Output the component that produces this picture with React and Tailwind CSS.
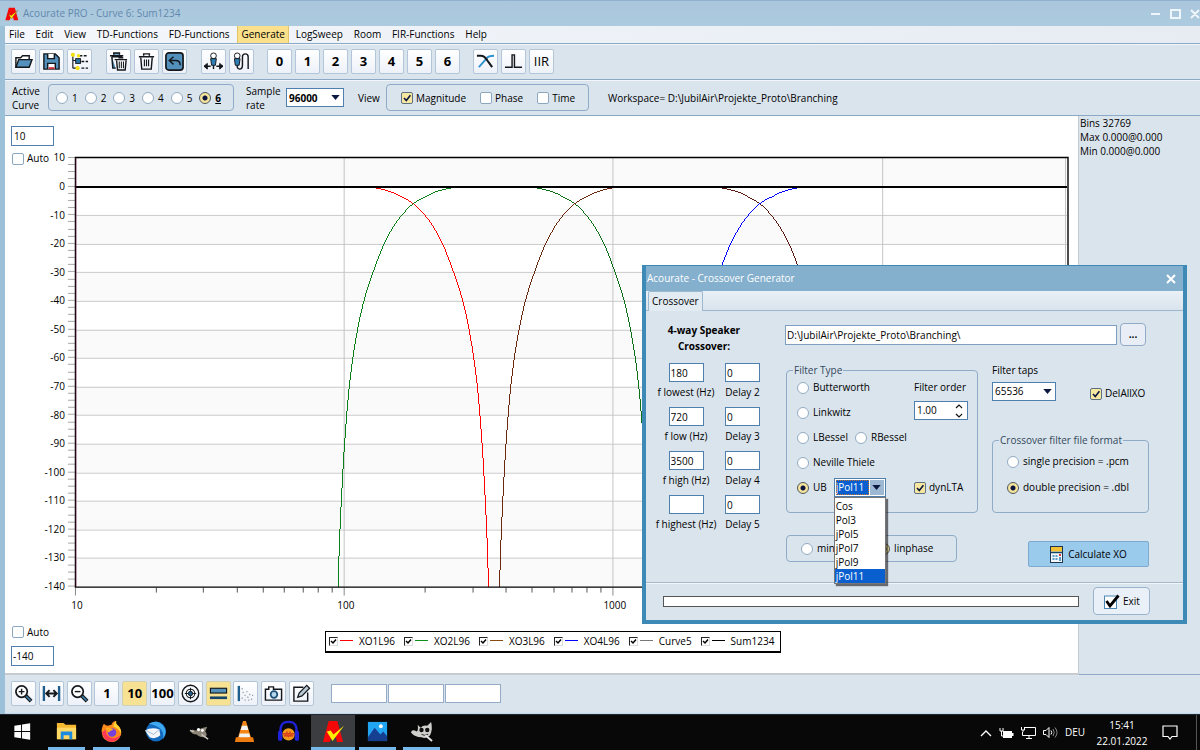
import { useState } from "react";

const X0 = 75;
const DECADE = 269.2;
const xOf = (hz) => X0 + Math.log10(hz / 10) * DECADE;
const yOf = (db) => 158 + (10 - db) * 2.86;

// Slope of one crossover: distance from the centre frequency, y position
const SLOPE = [
    [-62, 186.6], [-50, 187], [-38, 188], [-24, 191.3], [-14, 195.7], [0, 203.7],
    [11.3, 215], [21.3, 229], [31.6, 249.3], [40.3, 272.3], [47.3, 293.3], [53, 315.7],
    [57.6, 340], [61.2, 363], [65.2, 398], [69.2, 450], [72, 500], [74, 545], [75.3, 587],
];

const CURVES = [
    { center: 413.7, side: 1, color: "#ff0000" },
    { center: 413.7, side: -1, color: "#0b8018" },
    { center: 575.3, side: 1, color: "#0b7018" },
    { center: 575.3, side: -1, color: "#6b2a10" },
    { center: 760.5, side: 1, color: "#5a1a10" },
    { center: 760.5, side: -1, color: "#0000ff" },
];

const slopePath = (center, side) => {
    const p = SLOPE.map(([d, y]) => [center + side * d, y]);
    let d = `M${p[0][0]} ${p[0][1]}`;
    for (let i = 0; i < p.length - 1; i++) {
        const a = p[i - 1] || p[i];
        const b = p[i];
        const c = p[i + 1];
        const e = p[i + 2] || c;
        d += ` C${b[0] + (c[0] - a[0]) / 6} ${b[1] + (c[1] - a[1]) / 6} ${c[0] - (e[0] - b[0]) / 6} ${c[1] - (e[1] - b[1]) / 6} ${c[0]} ${c[1]}`;
    }
    return d;
};

const LEVELS = Array.from({ length: 16 }, (_, i) => 10 - i * 10);
const MINOR_Y = Array.from({ length: 61 }, (_, i) => 10 - i * 2.5);
const MINOR_X = [10, 100, 1000, 10000]
    .flatMap((base) => [2, 3, 4, 5, 6, 7, 8, 9].map((n) => n * base))
    .filter((hz) => hz <= 48000);

const Chart = () => (
    <svg viewBox="5 146 1074 479" className="w-full block [grid-area:1/1]">
        {LEVELS.slice(0, 15).map((db, i) => (
            <rect key={db} x="75" y={yOf(db)} width="993" height="28.6" fill={i % 2 ? "#ffffff" : "#fafafa"} />
        ))}
        {LEVELS.slice(1, 15).map((db) => (
            <path key={db} d={`M75 ${Math.round(yOf(db)) + 0.5}H1068`} stroke="#cacaca" />
        ))}
        {[100, 1000, 10000, 48000].map((hz) => (
            <path key={hz} d={`M${Math.round(xOf(hz)) + 0.5} 158V587`} stroke="#c4c4c4" />
        ))}
        {MINOR_Y.map((db) => (
            <path key={db} d={`M68 ${Math.round(yOf(db)) - 0.5}H75`} stroke="#a8a8a8" />
        ))}
        {MINOR_X.map((hz) => (
            <path key={hz} d={`M${Math.round(xOf(hz)) + 0.5} 588V593`} stroke="#555" />
        ))}
        {[10, 100, 1000, 10000].map((hz) => (
            <path key={hz} d={`M${Math.round(xOf(hz)) + 0.5} 588V596`} stroke="#888" />
        ))}
        {CURVES.map((c) => (
            <path key={c.center + c.color} d={slopePath(c.center, c.side)} fill="none" stroke={c.color} shapeRendering="crispEdges" />
        ))}
        <path d="M75 187H1068" stroke="#000" strokeWidth="2" />
        <path d="M75.5 157.5H1069V587.5H75.5Z" fill="none" stroke="#000" strokeWidth="1.4" />
        <path d="M76 158V587" stroke="#6b1140" strokeWidth=".6" />
        {LEVELS.map((db) => (
            <text key={db} x="65" y={yOf(db) + 3.5} textAnchor="end" fontSize="10" fill="#000">{db}</text>
        ))}
        {[10, 100, 1000].map((hz) => (
            <text key={hz} x={xOf(hz) + 2} y="609" textAnchor="middle" fontSize="10" fill="#000">{hz}</text>
        ))}
    </svg>
);

const Check = ({ label, defaultChecked, className = "gap-[3px]" }) => (
    <label className={`flex items-center whitespace-nowrap ${className}`}>
        <span className="grid shrink-0">
            <input
                type="checkbox"
                defaultChecked={defaultChecked}
                className="peer [grid-area:1/1] appearance-none w-3 h-3 rounded-[2px] border border-[#8ba6bf] bg-white checked:bg-[#f7e8a0] checked:border-[#5d6f80]"
            />
            <svg viewBox="0 0 12 12" className="[grid-area:1/1] w-3 h-3 pointer-events-none invisible peer-checked:visible">
                <path d="M3 6l2.3 2.6L9.4 3.2" fill="none" stroke="#0b1540" strokeWidth="1.6" />
            </svg>
        </span>
        {label}
    </label>
);

const Radio = ({ name, label, defaultChecked, className = "gap-[4px]" }) => (
    <label className={`flex items-center whitespace-nowrap ${className}`}>
        <input
            type="radio"
            name={name}
            defaultChecked={defaultChecked}
            className="appearance-none shrink-0 w-3 h-3 rounded-full border border-[#93abc1] bg-white checked:border-[#4d565c] checked:bg-[radial-gradient(circle,#0b1540_0_2px,#f6e59a_3px)]"
        />
        {label}
    </label>
);

const ToolButton = ({ label, active, children }) => (
    <button
        type="button"
        aria-label={label}
        className={`w-[25px] h-[25px] shrink-0 flex items-center justify-center rounded-[2px] border text-[13px] font-bold ${active ? "bg-[#f7e294] border-[#cfd0b4]" : "bg-linear-to-b from-white to-[#edf1f8] border-[#b3c5d8]"}`}
    >
        {children}
    </button>
);

const Icon = ({ children, className = "w-[19px] h-[19px]" }) => (
    <svg viewBox="0 0 20 20" fill="none" stroke="#14181c" strokeWidth="1.5" className={`shrink-0 ${className}`}>
        {children}
    </svg>
);

const Arrow = () => (
    <svg viewBox="0 0 10 6" className="w-[9px] h-[5px]">
        <path d="M0 0H10L5 6Z" fill="#0b1840" />
    </svg>
);

const Logo = ({ className }) => (
    <svg viewBox="0 0 20 20" className={className}>
        <path d="M5.5 1H14L19 19H12.5L11.8 15H8L6.5 19H0.5Z" fill="#f40808" />
        <path d="M5 10L9 17L18 5L9 12Z" fill="#fff000" stroke="#7a1c00" strokeWidth=".5" />
    </svg>
);

const MENU = ["File", "Edit", "View", "TD-Functions", "FD-Functions", "Generate", "LogSweep", "Room", "FIR-Functions", "Help"];

const TitleBar = () => (
    <header className="h-[26px] flex items-center pl-[5px] border-t border-[#8fb0cf] bg-linear-to-b from-[#a9c6dc] to-[#adcbdf] text-[#6288ae]">
        <Logo className="w-[14px] h-[14px] mr-[4px]" />
        <h1 className="flex-1">Acourate PRO - Curve 6: Sum1234</h1>
        <svg viewBox="0 0 52 12" className="w-[52px] h-3 mr-[-1px]" fill="none" stroke="#eef6fb" strokeWidth="2">
            <path d="M2 6H11M22 2H31V10H22ZM42 2L50 10M50 2L42 10" />
        </svg>
    </header>
);

const MenuBar = () => (
    <div className="h-[18px] border-b border-[#8ba9c6] bg-linear-to-r from-[#f4f7fc] to-[#e6ecf2]">
        <nav className="w-[486px] h-full flex items-center justify-between">
            {MENU.map((m) => (
                <button
                    key={m}
                    type="button"
                    className={`h-full whitespace-nowrap ${m === "Generate" ? "px-[3px] ml-px bg-[#fae08a] border-x border-[#e0c465]" : "px-[4px]"}`}
                >
                    {m}
                </button>
            ))}
        </nav>
    </div>
);

const MainToolbar = () => (
    <div className="h-9 flex items-center gap-[14px] pl-[6px] border-b border-[#8ba9c6] shadow-[inset_0_1px_#f2f6fa]">
        <div className="flex gap-[3px]">
            <ToolButton label="Open">
                <Icon>
                    <path d="M2 16V6H7L9 4H16V8" fill="#fff" />
                    <path d="M2 16L5 8H19L16 16Z" fill="#5390bb" />
                </Icon>
            </ToolButton>
            <ToolButton label="Save">
                <Icon>
                    <path d="M2 2H14L18 6V18H2Z" fill="#5390bb" />
                    <path d="M6 2V7H13V2" fill="#fff" />
                    <path d="M6 18V12H14V18" fill="#fff" />
                    <path d="M7 17H13" stroke="#cc2936" strokeWidth="2" />
                </Icon>
            </ToolButton>
            <ToolButton label="Structure">
                <Icon>
                    <path d="M3 2V17M3 9H8M3 17H8M9 4H11" strokeWidth="1.2" />
                    <path d="M10 4H19M12 10H19M12 17H19" strokeDasharray="3 1.5" />
                    <circle cx="3" cy="3" r="2.2" fill="#f3df12" stroke="none" />
                    <circle cx="9" cy="4" r="1.8" fill="#f3df12" stroke="none" />
                    <rect x="6" y="7" width="5" height="5" fill="#2b74a8" strokeWidth="1" />
                    <circle cx="8" cy="17" r="2.2" fill="#f3df12" stroke="none" />
                </Icon>
            </ToolButton>
        </div>
        <div className="flex gap-[3px]">
            <ToolButton label="Clear all curves">
                <Icon>
                    <path d="M1 4H15M5 3V1H11V3M3 5L4 17H7M3 5H14" fill="#5390bb" />
                    <path d="M6 8H19M8 9L9 19H17L18 9M10 6H15" fill="#fff" />
                    <path d="M10.8 10V17M13 10V17M15.200 10V17" strokeWidth="1.1" />
                </Icon>
            </ToolButton>
            <ToolButton label="Clear curve">
                <Icon>
                    <path d="M2 5H18M7 4V2H13V4M4 6L5 18H15L16 6" />
                    <path d="M7.800 8V15M10 8V15M12.200 8V15" strokeWidth="1.2" />
                </Icon>
            </ToolButton>
            <ToolButton label="Undo">
                <Icon>
                    <rect x="1" y="1" width="18" height="18" rx="3" fill="#5390bb" strokeWidth="1.8" />
                    <path d="M5 9H11Q16 9 16 14M9 5L4.500 9L9 13" />
                </Icon>
            </ToolButton>
        </div>
        <div className="flex gap-[3px]">
            <ToolButton label="Calibrate">
                <Icon>
                    <circle cx="10" cy="4" r="3" fill="#fff" strokeWidth="1" />
                    <path d="M7 7H13L12 14H8Z" fill="#2f7eb5" strokeWidth="1" />
                    <path d="M10 14V18" />
                    <path d="M0 15H7M13 15H20" strokeWidth="1.500" />
                    <path d="M3.500 12L0 15L3.500 18ZM16.500 12L20 15L16.500 18Z" fill="#14181c" strokeWidth="1" />
                </Icon>
            </ToolButton>
            <ToolButton label="Microphone">
                <Icon>
                    <circle cx="5.500" cy="4" r="3" fill="#fff" strokeWidth="1" />
                    <path d="M2.500 7H8.500L7.500 14H3.500Z" fill="#2f7eb5" strokeWidth="1" />
                    <path d="M5.500 14V16Q6 18 8 18Q11 18 11 14V5Q11 2 14 2Q17 2 17 5V18" />
                </Icon>
            </ToolButton>
        </div>
        <div className="flex gap-[3px] -ml-px">
            {["0", "1", "2", "3", "4", "5", "6"].map((n) => (
                <ToolButton key={n} label={`Curve ${n}`}>{n}</ToolButton>
            ))}
        </div>
        <div className="flex gap-[3px] -ml-px">
            <ToolButton label="Crossover">
                <Icon>
                    <path d="M3 16L11 7Q13 4 19 4" stroke="#2f93cf" strokeWidth="2" />
                    <path d="M1 4H5Q9 4 12 9L17 16" strokeWidth="2.200" />
                </Icon>
            </ToolButton>
            <ToolButton label="Pulse">
                <Icon><path d="M1 16H8.500V3H11V16H19" /></Icon>
            </ToolButton>
            <ToolButton label="IIR"><span className="font-normal text-[13px]">IIR</span></ToolButton>
        </div>
    </div>
);

const CurveBar = () => (
    <div className="h-9 flex items-center pl-[7px] border-b border-[#8ba9c6] shadow-[inset_0_1px_#f2f6fa] leading-[14px]">
        <p className="w-9">Active Curve</p>
        <div className="w-[186px] h-[27px] shrink-0 flex items-center justify-between pl-[7px] pr-[12px] rounded border border-[#8fabc8]">
            {["1", "2", "3", "4", "5"].map((n) => (
                <Radio key={n} name="curve" label={n} />
            ))}
            <Radio name="curve" label={<b className="underline">6</b>} defaultChecked />
        </div>
        <label htmlFor="rate" className="w-10 ml-3">Sample rate</label>
        <div className="relative">
            <select id="rate" className="appearance-none w-[58px] h-[19px] pl-[2px] border border-[#4f7fae] bg-white font-bold">
                <option>96000</option>
            </select>
            <span className="absolute right-[4px] top-[7px] pointer-events-none flex"><Arrow /></span>
        </div>
        <p className="w-7 ml-[14px]">View</p>
        <div className="w-[203px] h-[27px] flex items-center gap-[14px] pl-[14px] rounded border border-[#8fabc8]">
            <Check label="Magnitude" defaultChecked />
            <Check label="Phase" />
            <Check label="Time" />
        </div>
        <p className="ml-[19px] whitespace-nowrap">Workspace= D:\JubilAir\Projekte_Proto\Branching</p>
    </div>
);

const LEGEND = [
    ["XO1L96", "#ff0000"],
    ["XO2L96", "#0b9018"],
    ["XO3L96", "#8a4a10"],
    ["XO4L96", "#0000ff"],
    ["Curve5", "#777777"],
    ["Sum1234", "#000000"],
];

const Legend = () => (
    <div className="h-[22px] ml-[271px] flex items-center gap-[9px] pl-[3px] pr-[6px] border border-b-2 border-black bg-white">
        {LEGEND.map(([name, color]) => (
            <label key={name} className="flex items-center whitespace-nowrap">
                <span className="grid">
                    <input type="checkbox" defaultChecked className="[grid-area:1/1] appearance-none w-[9px] h-[9px] border border-r-[#ddd] border-b-[#ddd] border-[#222]" />
                    <svg viewBox="0 0 9 9" className="[grid-area:1/1] w-[9px] h-[9px] pointer-events-none">
                        <path d="M2 4L4 6L7 2.500" fill="none" stroke="#000" strokeWidth="1.500" />
                    </svg>
                </span>
                <svg viewBox="0 0 13 2" className="w-[13px] h-[2px] ml-[2px] mr-[6px]">
                    <path d="M0 .5H13" stroke={color} />
                </svg>
                {name}
            </label>
        ))}
    </div>
);

const ChartPane = () => (
    <section className="flex-1 min-w-0 flex flex-col bg-white border-r border-b-2 border-[#c6cbd0] pt-[10px]">
        <input aria-label="Upper limit" defaultValue="10" className="w-[43px] h-5 ml-[6px] pl-[2px] border border-[#4f7fae] bg-white" />
        <div className="grid">
            <Chart />
            <div className="[grid-area:1/1] justify-self-start pl-[7px] pt-[5px]">
                <Check label="Auto" />
            </div>
        </div>
        <div className="flex items-start pl-[6px]">
            <div className="w-[43px] flex flex-col gap-[6px] pl-px">
                <Check label="Auto" />
                <input aria-label="Lower limit" defaultValue="-140" className="w-[43px] h-5 -ml-px pl-px border border-[#4f7fae] bg-white" />
            </div>
            <div className="pt-[6px]"><Legend /></div>
        </div>
    </section>
);

const BottomToolbar = () => (
    <div className="h-[39px] flex items-center gap-[17px] pl-[6px] pb-[2px] border-t border-[#dfe6ee] border-b border-b-[#bfd8ee]">
        <div className="w-[303px] flex justify-between">
            <ToolButton label="Zoom in">
                <Icon>
                    <path d="M12 12L18 18" strokeWidth="4" />
                    <path d="M12.500 12.500L17.500 17.500" stroke="#3f7fae" strokeWidth="1.500" />
                    <circle cx="8" cy="8" r="6" fill="#fff" strokeWidth="1.800" />
                    <path d="M5 8H11M8 5V11" />
                </Icon>
            </ToolButton>
            <ToolButton label="Fit width">
                <Icon>
                    <path d="M2 2V18M18 2V18" stroke="#1f5f8e" strokeWidth="2.500" />
                    <path d="M4 10H16M8 6.500L4.500 10L8 13.500M12 6.500L15.500 10L12 13.500" strokeWidth="2" />
                </Icon>
            </ToolButton>
            <ToolButton label="Zoom out">
                <Icon>
                    <path d="M12 12L18 18" strokeWidth="4" />
                    <path d="M12.500 12.500L17.500 17.500" stroke="#3f7fae" strokeWidth="1.500" />
                    <circle cx="8" cy="8" r="6" fill="#fff" strokeWidth="1.800" />
                    <path d="M5 8H11" />
                </Icon>
            </ToolButton>
            <ToolButton label="Scale 1">1</ToolButton>
            <ToolButton label="Scale 10" active>10</ToolButton>
            <ToolButton label="Scale 100">100</ToolButton>
            <ToolButton label="Target">
                <Icon>
                    <circle cx="10" cy="10" r="8.700" />
                    <circle cx="10" cy="10" r="4.500" strokeWidth="1.100" />
                    <path d="M10 4V8M10 12V16M4 10H8M12 10H16" strokeWidth="1" />
                    <circle cx="10" cy="10" r="2.300" fill="#1f5f8e" strokeWidth="1" />
                </Icon>
            </ToolButton>
            <ToolButton label="Lines" active>
                <Icon>
                    <rect x="1.500" y="4.500" width="17" height="5" fill="#5390bb" strokeWidth="1.200" />
                    <path d="M1 14.500H19" stroke="#16456a" strokeWidth="2.800" />
                </Icon>
            </ToolButton>
            <ToolButton label="Scatter">
                <Icon>
                    <path d="M3 2V18" stroke="#1f5f8e" strokeWidth="2.500" />
                    <path d="M6 5h1M7 9h1M9 12h1M6 15h1M11 8h1M12 14h1M9 17h1M14 11h1M16 16h1M17 12h1M13 17h1" stroke="#7d8c99" />
                </Icon>
            </ToolButton>
            <ToolButton label="Snapshot">
                <Icon>
                    <path d="M1.500 5.500H5V3H10V5.500H18.500V17H1.500Z" />
                    <circle cx="10.500" cy="11" r="3.500" fill="#b7d5ea" stroke="#1b4f78" strokeWidth="1.800" />
                </Icon>
            </ToolButton>
            <ToolButton label="Edit">
                <Icon>
                    <path d="M12 3.500H2V18H16.500V9" />
                    <path d="M6 14L7.500 9.500L15.500 1.500L18.500 4.500L10.500 12.500Z" fill="#b9c9d6" strokeWidth="1.300" />
                </Icon>
            </ToolButton>
        </div>
        <div className="flex gap-px">
            {["Cursor X", "Cursor Y", "Difference"].map((n) => (
                <input key={n} aria-label={n} readOnly className="w-14 h-[19px] border border-[#93abc6] bg-white" />
            ))}
        </div>
    </div>
);

const FIELDS = [
    ["f lowest (Hz)", "180", "Delay 2"],
    ["f low (Hz)", "720", "Delay 3"],
    ["f high (Hz)", "3500", "Delay 4"],
    ["f highest (Hz)", "", "Delay 5"],
];

const Field = ({ label, value }) => (
    <label className="flex flex-col items-center gap-[3px] whitespace-nowrap">
        <input defaultValue={value} className="w-[35px] h-[19px] pl-px border border-[#4f7fae] bg-white" />
        {label}
    </label>
);

const POLYS = ["Cos", "Pol3", "jPol5", "jPol7", "jPol9", "jPol11"];

const PolySelect = () => {
    const [value, setValue] = useState("jPol11");

    return (
        <div className="relative w-[52px]">
            <div className="flex h-[19px] border border-[#4f7fae] bg-white p-px">
                <select
                    aria-label="UB type"
                    value={value}
                    onChange={(e) => setValue(e.target.value)}
                    className="appearance-none w-[33px] bg-[#0a5fd0] text-white outline outline-dotted outline-[#c9732a] -outline-offset-1"
                >
                    {POLYS.map((p) => <option key={p}>{p}</option>)}
                </select>
                <span className="flex-1 flex items-center justify-center ml-px bg-[#9db8d2]"><Arrow /></span>
            </div>
            <ul className="absolute z-10 left-0 top-full w-[52px] pt-px border border-[#777] bg-white shadow-[2px_2px_1px_#00000088] leading-[14px]">
                {POLYS.map((p) => (
                    <li
                        key={p}
                        onClick={() => setValue(p)}
                        className={`h-[14px] pl-px ${p === value ? "bg-[#0a5fd0] text-white" : ""}`}
                    >
                        {p}
                    </li>
                ))}
            </ul>
        </div>
    );
};

const FilterType = () => (
    <fieldset className="w-[192px] h-[150px] border border-[#8fabc8] rounded pl-[10px]">
        <legend className="-ml-[4px] px-px text-[#33485c] leading-[15px]">Filter Type</legend>
        <div className="flex -mt-[3px]">
            <div className="w-[117px] flex flex-col">
                <div className="h-[25px] flex items-center"><Radio name="type" label="Butterworth" /></div>
                <div className="h-[25px] flex items-center"><Radio name="type" label="Linkwitz" /></div>
                <div className="h-[25px] flex items-center gap-[7px]">
                    <Radio name="type" label="LBessel" />
                    <Radio name="type" label="RBessel" />
                </div>
                <div className="h-[25px] flex items-center"><Radio name="type" label="Neville Thiele" /></div>
                <div className="h-[25px] flex items-center gap-[7px]">
                    <Radio name="type" label="UB" defaultChecked />
                    <PolySelect />
                </div>
            </div>
            <div className="flex flex-col justify-between pb-[5px]">
                <label className="flex flex-col whitespace-nowrap pt-[5px]">
                    Filter order
                    <span className="flex items-center w-[54px] h-[19px] mt-[6px] border border-[#4f7fae] bg-white">
                        <input defaultValue="1.00" className="w-10 pl-[2px]" />
                        <svg viewBox="0 0 8 14" className="w-2 h-[14px]" fill="none" stroke="#111" strokeWidth="1.200">
                            <path d="M1 4L4 1L7 4M1 10L4 13L7 10" />
                        </svg>
                    </span>
                </label>
                <Check label="dynLTA" defaultChecked />
            </div>
        </div>
    </fieldset>
);

const FileFormat = () => (
    <fieldset className="w-[157px] h-[80px] border border-[#8fabc8] rounded pl-[14px]">
        <legend className="-ml-[8px] px-px text-[#33485c] leading-[15px] whitespace-nowrap">Crossover filter file format</legend>
        <div className="flex flex-col gap-[11px] pt-[6px]">
            <Radio name="format" label="single precision = .pcm" />
            <Radio name="format" label="double precision = .dbl" defaultChecked />
        </div>
    </fieldset>
);

const CrossoverDialog = () => (
    <div role="dialog" aria-label="Crossover Generator" className="absolute left-[642px] top-[265px] w-[545px] border-4 border-t border-[#3e8ab6] bg-[#dae4ed]">
        <div className="h-[25px] flex items-center justify-between pl-px pr-[4px] bg-[#84b0ce] text-white">
            <h2>Acourate - Crossover Generator</h2>
            <button type="button" aria-label="Close" className="p-[3px]">
                <svg viewBox="0 0 10 10" className="w-[10px] h-[10px]" stroke="#fff" strokeWidth="2">
                    <path d="M1 1L9 9M9 1L1 9" />
                </svg>
            </button>
        </div>
        <div className="h-5 pl-[2px] border-b border-[#9bb8cf] bg-linear-to-b from-[#e9f0f6] to-[#dae4ed]">
            <button type="button" className="h-5 px-[3px] border border-b-0 border-[#9bb8cf] bg-[#e2eaf2] rounded-t-[2px]">Crossover</button>
        </div>
        <div className="h-[272px] flex pt-[11px] pl-[9px] border-b border-[#a3bacd]">
            <div className="w-[130px]">
                <h3 className="w-[98px] text-center font-bold leading-4">4-way Speaker Crossover:</h3>
                <div className="grid grid-cols-[62px_35px] gap-x-[8px] gap-y-[7px] mt-[9px]">
                    {FIELDS.map(([label, value, delay]) => [
                        <Field key={label} label={label} value={value} />,
                        <Field key={delay} label={delay} value="0" />,
                    ])}
                </div>
            </div>
            <div className="w-[364px] pt-px">
                <div className="flex items-center gap-[3px]">
                    <input aria-label="Folder" defaultValue="D:\JubilAir\Projekte_Proto\Branching\" className="w-[332px] h-5 pl-px border border-[#7f9fc2] bg-white" />
                    <button type="button" className="w-[26px] h-[23px] rounded border border-[#8fabc8] bg-[#e8edf6] font-bold">...</button>
                </div>
                <div className="flex justify-between mt-[17px] pl-px">
                    <FilterType />
                    <div className="w-[157px] flex flex-col justify-between">
                        <div className="flex items-end gap-[34px]">
                            <label className="flex flex-col gap-[4px]">
                                Filter taps
                                <span className="relative">
                                    <select className="appearance-none w-16 h-[19px] pl-[2px] border border-[#4f7fae] bg-white">
                                        <option>65536</option>
                                    </select>
                                    <span className="absolute right-[4px] top-[7px] pointer-events-none flex"><Arrow /></span>
                                </span>
                            </label>
                            <Check label="DelAllXO" defaultChecked />
                        </div>
                        <FileFormat />
                    </div>
                </div>
                <div className="flex items-start justify-between mt-[22px] pl-px">
                    <div className="w-[171px] h-[27px] flex items-center gap-[15px] pl-[14px] rounded border border-[#8fabc8]">
                        <Radio name="phase" label="minphase" />
                        <Radio name="phase" label="linphase" defaultChecked />
                    </div>
                    <button type="button" className="w-[121px] h-[26px] mt-[6px] flex items-center justify-center gap-[5px] rounded-[2px] border border-[#7faad0] bg-[#9acaec]">
                        <svg viewBox="0 0 13 17" className="w-[13px] h-[17px]">
                            <rect x=".5" y=".5" width="12" height="16" fill="#f4f8fb" stroke="#1c3550" />
                            <rect x="1" y="1" width="11" height="4.500" fill="#f3c032" />
                            <path d="M1 6.500H12" stroke="#16456a" strokeWidth="1.500" />
                            <path d="M2.500 10H7.500M2.500 13H7.500" stroke="#5b9cc9" strokeWidth="2" strokeDasharray="2 1" />
                            <path d="M9 9H11" stroke="#d33" strokeWidth="2" />
                            <path d="M10 11V15" stroke="#5b9cc9" strokeWidth="2" />
                        </svg>
                        Calculate XO
                    </button>
                </div>
            </div>
        </div>
        <div className="h-[37px] flex items-center gap-[14px] pl-[17px] pb-[2px] border-t border-[#f2f6fa]">
            <div role="progressbar" aria-label="Progress" className="w-[416px] h-[11px] border border-[#555] bg-white" />
            <button type="button" className="w-[57px] h-7 flex items-center justify-center gap-[3px] rounded border border-[#9bb4cd] bg-[#eaf0f8]">
                <svg viewBox="0 0 17 17" className="w-[17px] h-[17px]">
                    <rect x="1.500" y="3" width="12" height="12.500" fill="#fff" stroke="#4a87b4" />
                    <path d="M3.500 8L7 13L15.500 2.500" fill="none" stroke="#000" strokeWidth="2.800" />
                </svg>
                Exit
            </button>
        </div>
    </div>
);

const TaskButton = ({ label, running, active, children }) => (
    <button type="button" aria-label={label} className={`flex-1 h-full flex flex-col items-center justify-end ${active ? "bg-[#3b3d40]" : ""}`}>
        <svg viewBox="0 0 24 24" className="w-[23px] h-[23px] mb-[4px]">{children}</svg>
        <span className={`h-[3px] ${active ? "w-full" : "w-[37px]"} ${running ? "bg-[#76b9ed]" : ""}`} />
    </button>
);

const Taskbar = () => (
    <footer className="h-9 flex items-center bg-[#080808] text-white border-t border-[#22282c]">
        <div className="w-[444px] h-full flex">
            <TaskButton label="Start">
                <path d="M3.500 6L10.500 5V11.500H3.500ZM11.500 4.800L20 3.500V11.500H11.500ZM3.500 12.500H10.500V19L3.500 18ZM11.500 12.500H20V20.500L11.500 19.200Z" fill="#fff" />
            </TaskButton>
            <TaskButton label="Explorer" running>
                <path d="M2 3H9L11 5H22V20H2Z" fill="#f5b92f" />
                <path d="M2 8H22V20H2Z" fill="#ffd866" />
                <path d="M6 20V12H18V20H15V16H9V20Z" fill="#1b8ae0" />
            </TaskButton>
            <TaskButton label="Firefox" running>
                <path d="M12 5Q13 1 17 1Q16 4 19 6Q23 10 22 15Q19 23 12 23Q3 22 2 14Q1 9 4 4Q6 6 8 6Z" fill="#ff8a1c" />
                <path d="M17 1Q16 4 19 6Q22 9 22 14Q19 8 14 7Q14 3 17 1Z" fill="#ffd735" />
                <path d="M2 13Q4 22 12 23Q19 22 22 15Q18 19 13 19Q6 18 6 10Z" fill="#ff3854" />
                <circle cx="12.500" cy="13" r="4.500" fill="#7540db" />
                <path d="M6 8Q10 7 14 10Q11 11 9 13Q7 12 6 8Z" fill="#ffab22" />
            </TaskButton>
            <TaskButton label="Thunderbird">
                <circle cx="12.500" cy="12" r="10.500" fill="#1369bd" />
                <path d="M5 4Q14-1 20 6Q25 12 20 20Q21 12 16 8Q11 5 5 4Z" fill="#3fa9ef" />
                <path d="M1 11Q8 7 16 10L17 16Q12 21 6 18Z" fill="#f3f7fb" />
                <path d="M2 11L10 15L16 10" fill="none" stroke="#9bb6ce" />
            </TaskButton>
            <TaskButton label="GIMP">
                <path d="M5 10Q8 12 11 10Q14 8 20 7L18 12Q21 15 18 18Q12 18 9 15Q4 15 3 12Z" fill="#8d8578" />
                <circle cx="11" cy="10" r="1.700" fill="#fff" />
                <circle cx="15" cy="11" r="1.500" fill="#fff" />
                <path d="M2 11L6 12M14 15L21 20" stroke="#c9c4b8" strokeWidth="1.500" />
            </TaskButton>
            <TaskButton label="VLC">
                <path d="M10.500 1H13.500L19 19H5Z" fill="#f58616" />
                <path d="M9.300 6H14.700L16 10.500H8ZM7 14H17L18 18Q12 20 6 18Z" fill="#f2f2f2" />
                <path d="M3 18H21L22 23H2Z" fill="#ef7c10" />
            </TaskButton>
            <TaskButton label="Audacity">
                <path d="M4 14Q2 2 12 2Q22 2 20 14" fill="none" stroke="#1f22d8" strokeWidth="2.500" />
                <circle cx="12" cy="15" r="6.500" fill="#f39a1b" />
                <path d="M6 14.500H18M7 16.500H17" stroke="#d02a18" strokeWidth="1.200" />
                <path d="M9 15.500L10.500 12L12 18L13.500 12L15 15.500" fill="none" stroke="#e0421c" />
                <rect x="1" y="11" width="4.500" height="11" rx="2.200" fill="#1f22d8" />
                <rect x="18.500" y="11" width="4.500" height="11" rx="2.200" fill="#1f22d8" />
            </TaskButton>
            <TaskButton label="Acourate" running active>
                <path d="M7 1H16L22 23H15.500L14.500 18H10L8 23H1Z" fill="#f40808" />
                <path d="M5 12L11 22L23 6L12 15L9 11Z" fill="#fff000" />
            </TaskButton>
            <TaskButton label="Photos" running>
                <rect x="2" y="2" width="20" height="20" fill="#22a5f1" />
                <path d="M2 18L9 8L15 15L18 12L22 17V22H2Z" fill="#153f91" />
                <circle cx="15.500" cy="6.500" r="2" fill="#fff" />
            </TaskButton>
            <TaskButton label="Image editor" running>
                <path d="M8 5L11 8Q14 5 18 6L22 2Q24 9 21 16Q17 20 12 18Q5 18 1 13Q2 9 7 12Q9 11 8 5Z" fill="#cfcfcc" />
                <circle cx="12" cy="10.500" r="2.300" fill="#111" />
                <circle cx="18" cy="10.500" r="2.300" fill="#111" />
                <path d="M12 15Q15 17 19 15" fill="none" stroke="#222" />
                <path d="M16 16L23 22" stroke="#e4e4e4" strokeWidth="2" />
            </TaskButton>
        </div>
        <div className="ml-auto h-full flex items-center gap-[7px]">
            <svg viewBox="0 0 12 8" className="w-3 h-2" fill="none" stroke="#fff" strokeWidth="1.300"><path d="M1 7L6 2L11 7" /></svg>
            <svg viewBox="0 0 15 12" className="w-[15px] h-3">
                <path d="M4 4H13V6H14.500V9H13V11H4Z" fill="#fff" />
                <path d="M1 1V4H4V1M2.500 4V9H5" fill="none" stroke="#fff" />
            </svg>
            <svg viewBox="0 0 15 13" className="w-[15px] h-[13px]" fill="none" stroke="#fff"><path d="M4 1.500H14.500V9.500H1.500V6M8 10V12M5 12.500H11M.5 1V4H3.500V1M2 4V6" /></svg>
            <svg viewBox="0 0 15 13" className="w-[15px] h-[13px]" fill="none" stroke="#fff">
                <path d="M.5 4.500H3L6 1.500V11.500L3 8.500H.5ZM8 4.500Q9.500 6.500 8 8.500" />
                <path d="M10 3Q12.500 6.500 10 10M12 1.500Q16 6.500 12 11.500" stroke="#888" />
            </svg>
            <span>DEU</span>
            <div className="text-center leading-4 w-[60px]">
                <p>15:41</p>
                <p>22.01.2022</p>
            </div>
            <svg viewBox="0 0 16 15" className="w-4 h-[15px] ml-[3px]" fill="none" stroke="#fff" strokeWidth="1.200"><path d="M1 1H15V11.500H10L8 14L6 11.500H1Z" /></svg>
            <span className="h-full border-l border-[#555] w-[4px] ml-[11px]" />
        </div>
    </footer>
);

const App = () => (
    <div className="relative min-h-screen flex flex-col overflow-hidden bg-[#dae4ed] text-black text-[10px] leading-[15px] font-['Open_Sans','Noto_Sans',sans-serif]">
        <TitleBar />
        <div className="flex-1 flex flex-col border-l-[5px] border-[#9dc0d9]">
            <MenuBar />
            <MainToolbar />
            <CurveBar />
            <div className="flex-1 flex">
                <ChartPane />
                <aside className="w-[121px] shrink-0 pl-px border-b border-[#8ba9c6] leading-[14px]">
                    <p>Bins 32769</p>
                    <p>Max 0.000@0.000</p>
                    <p>Min 0.000@0.000</p>
                </aside>
            </div>
            <BottomToolbar />
        </div>
        <Taskbar />
        <CrossoverDialog />
    </div>
);

export default App;
